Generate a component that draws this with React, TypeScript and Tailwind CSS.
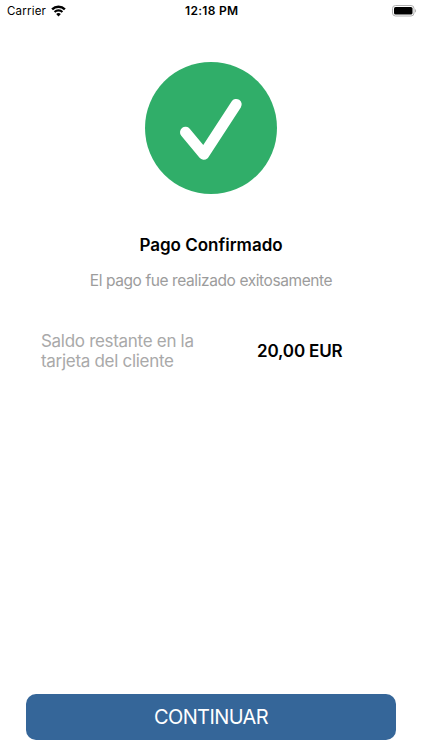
const StatusBar = () => (
  <header className="h-6 pl-[7px] pr-[5.5px] -mb-px grid grid-cols-3 items-center text-[11.5px] leading-none text-black">
    <div className="flex items-center gap-[5px]">
      <span className="tracking-[0.2px]">Carrier</span>
      <svg className="-mt-[3px]" width="15" height="12" viewBox="0 0 16 12" fill="none" stroke="currentColor">
        <path d="M1.2 4.3a9.6 9.6 0 0 1 13.6 0" strokeWidth="2.6" />
        <path d="M3.8 7.1a5.9 5.9 0 0 1 8.4 0" strokeWidth="2.2" />
        <path d="M8 11.9 5.5 9.3a3.5 3.5 0 0 1 5 0z" fill="currentColor" stroke="none" />
      </svg>
    </div>
    <span className="-mt-0.5 text-center text-xs leading-none font-semibold tracking-[0.3px] whitespace-nowrap">
      12:18 PM
    </span>
    <svg className="justify-self-end -mt-[3px]" width="25" height="12" viewBox="0 0 25 12">
      <rect x="0.5" y="0.5" width="21.5" height="10.5" rx="3" fill="none" stroke="#b0b0b0" />
      <rect x="2" y="2" width="18.5" height="7.5" rx="1.6" fill="#000" />
      <path d="M23.2 4v3.6c1.2-.5 1.2-3.1 0-3.6z" fill="#a3a3a3" />
    </svg>
  </header>
);

const SuccessIcon = () => (
  <svg width="132" height="132" viewBox="0 0 132 132" fill="none">
    <circle cx="66" cy="66" r="66" fill="#30ae69" />
    <path
      d="M40.5 70.2 58.8 92.3 91.2 42.4"
      stroke="#fff"
      strokeWidth="11"
      strokeLinecap="round"
      strokeLinejoin="round"
    />
  </svg>
);

export default function App() {
  return (
    <div className="w-full h-screen bg-white flex flex-col overflow-hidden font-[Inter,sans-serif]">
      <StatusBar />

      <main className="flex-1 flex flex-col items-center pt-[38.5px]">
        <SuccessIcon />
        <h1 className="mt-[39px] text-[17px] leading-6 font-semibold text-black">Pago Confirmado</h1>
        <p className="mt-3 text-[15.5px] leading-6 tracking-[-0.41px] text-[#9c9c9c]">
          El pago fue realizado exitosamente
        </p>

        {/* Remaining balance */}
        <div className="mt-[38px] w-full pl-[41px] flex items-center">
          <p className="w-[216px] text-[17px] leading-5 tracking-[-0.3px] text-[#a9a9a9]">
            Saldo restante en la
            <br />
            tarjeta del cliente
          </p>
          <span className="mt-px text-[17px] leading-5 font-semibold tracking-[-0.15px] text-black">
            20,00 EUR
          </span>
        </div>
      </main>

      <footer className="px-[26px] pb-[10.5px]">
        <button className="w-full h-[46px] rounded-[10px] bg-[#356699] text-white text-xl tracking-[-0.6px]">
          CONTINUAR
        </button>
      </footer>
    </div>
  );
}
